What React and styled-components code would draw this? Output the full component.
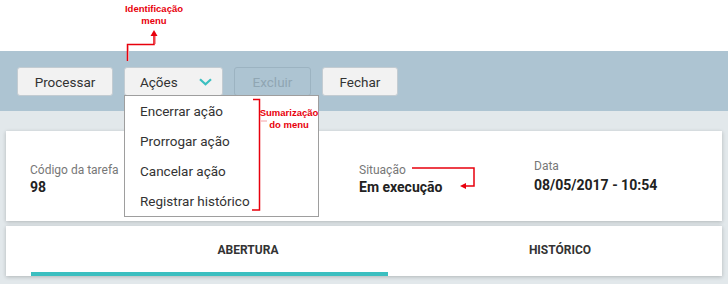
import React from "react";
import styled, { createGlobalStyle } from "styled-components";

const Global = createGlobalStyle`
  html, body { margin: 0; padding: 0; background: #fff; }
  body { font-family: Roboto, "Noto Sans", sans-serif; }
`;

const Page = styled.div`
  position: relative;
  width: 728px;
  height: 284px;
  overflow: hidden;
  background: #e2e8eb;
`;

const TopSpace = styled.div`
  height: 51px;
  background: #fff;
`;

const Toolbar = styled.div`
  height: 60px;
  box-sizing: border-box;
  background: #adc4d2;
  padding: 16px 17px 0;
  display: flex;
  align-items: flex-start;
  gap: 11px;
`;

const Button = styled.button`
  box-sizing: border-box;
  height: 29px;
  width: ${(p) => p.$w}px;
  border-radius: 3px;
  border: 1px solid ${(p) => (p.disabled ? "#9cb3c1" : "#c3ccd2")};
  background: ${(p) => (p.disabled ? "#adc4d2" : "#f2f2f2")};
  color: ${(p) => (p.disabled ? "#90a6b3" : "#333")};
  font-family: Roboto, sans-serif;
  font-size: 13.5px;
  padding: ${(p) => (p.$left ? "0 10px 0 15px" : "0")};
  display: flex;
  align-items: center;
  justify-content: ${(p) => (p.$left ? "space-between" : "center")};
  cursor: default;
`;

const DropWrap = styled.div`
  position: relative;
`;

const Menu = styled.ul`
  position: absolute;
  top: 28px;
  left: 0;
  width: 195px;
  margin: 0;
  padding: 0;
  list-style: none;
  background: #fff;
  border: 1px solid #9e9e9e;
  box-sizing: border-box;
  z-index: 5;
`;

const MenuItem = styled.li`
  height: 30px;
  line-height: 30px;
  padding-left: 15px;
  font-size: 13.5px;
  color: #333;
`;

const Content = styled.div`
  padding: 20px 6px 0;
  display: flex;
  flex-direction: column;
  gap: 5px;
`;

const Card = styled.div`
  position: relative;
  background: #fff;
  height: ${(p) => p.$h}px;
  box-shadow: 0 1px 4px rgba(0, 0, 0, 0.22);
`;

const InfoGrid = styled.div`
  display: grid;
  grid-template-columns: 329px 175px 1fr;
  padding-left: 24px;
  height: 100%;
  align-items: start;
`;

const Field = styled.div`
  padding-top: ${(p) => (p.$raised ? "27px" : "31px")};
  display: flex;
  flex-direction: column;
  gap: ${(p) => (p.$raised ? "3px" : "1px")};
`;

const Label = styled.span`
  font-size: 12px;
  color: #777;
  line-height: 16px;
`;

const Value = styled.span`
  font-size: 14px;
  font-weight: 700;
  color: #222;
  line-height: 17px;
`;

const Tabs = styled.div`
  display: flex;
  height: 100%;
  padding-left: 86px;
`;

const Tab = styled.div`
  width: 312px;
  display: flex;
  align-items: center;
  justify-content: center;
  font-size: 12px;
  font-weight: 700;
  color: #333;
  padding-bottom: 2px;
`;

const InkBar = styled.div`
  position: absolute;
  left: 25px;
  bottom: 0;
  width: 357px;
  height: 4px;
  background: #3bbfc0;
`;

const Overlay = styled.svg`
  position: absolute;
  left: 0;
  top: 0;
  pointer-events: none;
  z-index: 10;
`;

const Note = styled.div`
  position: absolute;
  left: ${(p) => p.$x}px;
  top: ${(p) => p.$y}px;
  width: ${(p) => p.$w}px;
  text-align: center;
  font-family: "Liberation Sans", Arial, sans-serif;
  font-weight: 700;
  font-size: 9.5px;
  line-height: 12px;
  color: #e8000c;
  z-index: 11;
`;

const Chevron = () => (
  <svg width="13" height="8" viewBox="0 0 13 8">
    <path d="M1 1.2 L6.5 6.3 L12 1.2" fill="none" stroke="#3bbfc0" strokeWidth="2.2" />
  </svg>
);

export default function App() {
  return (
    <>
      <Global />
      <Page>
        <TopSpace />
        <Toolbar>
          <Button $w={96}>Processar</Button>
          <DropWrap>
            <Button $w={99} $left>
              Ações
              <Chevron />
            </Button>
            <Menu>
              <MenuItem>Encerrar ação</MenuItem>
              <MenuItem>Prorrogar ação</MenuItem>
              <MenuItem>Cancelar ação</MenuItem>
              <MenuItem>Registrar histórico</MenuItem>
            </Menu>
          </DropWrap>
          <Button $w={77} disabled>Excluir</Button>
          <Button $w={76}>Fechar</Button>
        </Toolbar>
        <Content>
          <Card $h={90}>
            <InfoGrid>
              <Field>
                <Label>Código da tarefa</Label>
                <Value>98</Value>
              </Field>
              <Field>
                <Label>Situação</Label>
                <Value>Em execução</Value>
              </Field>
              <Field $raised>
                <Label>Data</Label>
                <Value>08/05/2017 - 10:54</Value>
              </Field>
            </InfoGrid>
          </Card>
          <Card $h={50}>
            <Tabs>
              <Tab>ABERTURA</Tab>
              <Tab>HISTÓRICO</Tab>
            </Tabs>
            <InkBar />
          </Card>
        </Content>

        <Note $x={116} $y={3} $w={76}>Identificação<br />menu</Note>
        <Note $x={252} $y={107} $w={74}>Sumarização<br />do menu</Note>

        <Overlay width="728" height="284" viewBox="0 0 728 284">
          <g fill="none" stroke="#e8000c" strokeWidth="1.5">
            <polyline points="127.5,61 127.5,44.5 154,44.5 154,34" />
            <polyline points="253,99.5 259.5,99.5 259.5,210 252,210" />
            <polyline points="412,168 474,168 474,186 465,186" />
          </g>
          <g stroke="#f4a0a4" strokeWidth="1">
            <line x1="128.5" y1="61" x2="128.5" y2="46" />
            <line x1="155.5" y1="44" x2="155.5" y2="36" />
            <line x1="261" y1="121" x2="267" y2="121" />
          </g>
          <g fill="#e8000c">
            <polygon points="150.5,36 157.5,36 154,30" />
            <polygon points="466,183 466,189 460,186" />
          </g>
        </Overlay>
      </Page>
    </>
  );
}
